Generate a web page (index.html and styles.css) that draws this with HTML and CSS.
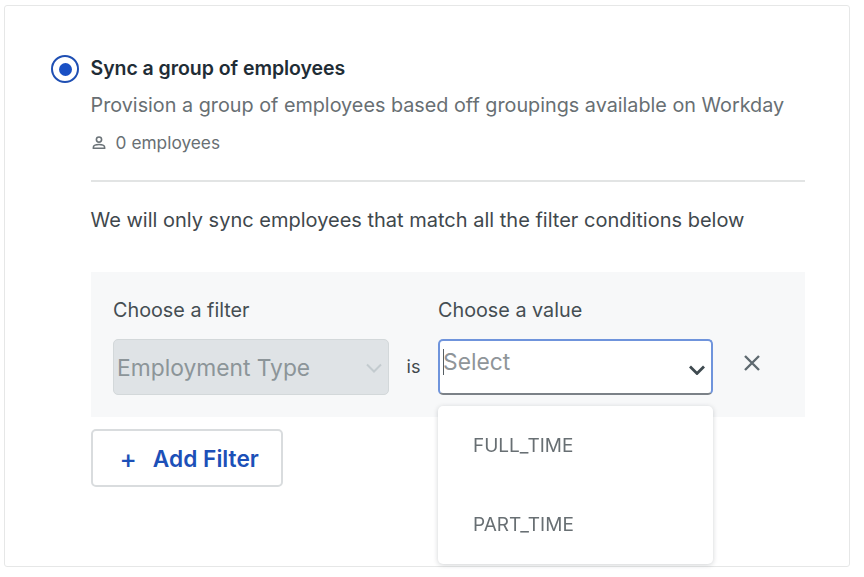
FILE: index.html
```html
<!DOCTYPE html>
<html lang="en">
<head>
<meta charset="utf-8">
<title>Sync a group of employees</title>
<link rel="stylesheet" href="styles.css">
</head>
<body>
<main class="card">
  <section class="option">
    <span class="radio"><span class="radio-dot"></span></span>
    <div class="option-body">
      <h2 class="title">Sync a group of employees</h2>
      <p class="desc">Provision a group of employees based off groupings available on Workday</p>
      <p class="count">
        <svg class="person" viewBox="0 0 16 16" width="16" height="16" fill="none" stroke="#6b7378" stroke-width="1.6"><circle cx="8" cy="4.6" r="2.6"/><path d="M2.400 13.200v-1c0-1.600 2.400-2.700 5.600-2.700s5.600 1.100 5.600 2.700v1z"/></svg>
        <span class="zero">0</span> employees
      </p>
      <hr class="rule">
      <p class="note">We will only sync employees that match all the filter conditions below</p>
      <div class="panel">
        <div class="field field-filter">
          <label class="label">Choose a filter</label>
          <div class="select select-disabled">
            <span>Employment Type</span>
            <svg class="chev" viewBox="0 0 18 10" width="18" height="10" fill="none" stroke="#c3cbcf" stroke-width="2"><path d="M2 1.500l7 7 7-7"/></svg>
          </div>
        </div>
        <span class="is">is</span>
        <div class="field field-value">
          <label class="label">Choose a value</label>
          <div class="select select-active">
            <span class="caret"></span><span class="placeholder">Select</span>
            <svg class="chev chev-dark" viewBox="0 0 18 10" width="18" height="10" fill="none" stroke="#3f4a50" stroke-width="2.800"><path d="M2 1.500l7 7 7-7"/></svg>
          </div>
          <ul class="menu">
            <li class="menu-item">FULL_TIME</li>
            <li class="menu-item">PART_TIME</li>
          </ul>
        </div>
        <svg class="close" viewBox="0 0 18 18" width="18" height="18" fill="none" stroke="#5f6a70" stroke-width="2.400"><path d="M2 2l14 14M16 2L2 16"/></svg>
      </div>
      <button class="add" type="button"><span class="plus">+</span>Add Filter</button>
    </div>
  </section>
</main>
</body>
</html>
```
FILE: styles.css
```css
* { box-sizing: border-box; }
html, body { margin: 0; height: 100%; background: #fff; }
body { font-family: Inter, "Liberation Sans", sans-serif; color: #3f484d; overflow: hidden; padding: 5px 14px 10px 4px; }
.card { height: 562px; border: 1px solid #e6e7e7; border-radius: 3px; padding: 47px 44px 0 46px; background: #fff; filter: blur(0.5px); }
.option { display: flex; gap: 12px; align-items: flex-start; }
.radio { flex: none; width: 28px; height: 28px; margin-top: 2px; border: 2.500px solid #1f4fb3; border-radius: 50%; display: flex; align-items: center; justify-content: center; }
.radio-dot { width: 13px; height: 13px; border-radius: 50%; background: #1a50c4; }
.option-body { flex: 1; min-width: 0; margin-left: -0.500px; }
.title { margin: 0; font-size: 19.500px; line-height: 30px; font-weight: 600; color: #1f2d36; letter-spacing: -0.050px; }
.desc { margin: 7px 0 0; font-size: 19.800px; line-height: 30px; color: #686f73; }
.count { margin: 10px 0 0; display: flex; align-items: center; font-size: 17.300px; line-height: 26px; color: #686f73; gap: 0; }
.person { margin-right: 9px; }
.zero { margin-right: 5px; }
.rule { margin: 24px 0 0; border: 0; border-top: 2px solid #e2e4e4; }
.note { margin: 23px 0 0; font-size: 20px; line-height: 30px; color: #3f484d; }
.panel { position: relative; margin-top: 37px; height: 145px; padding: 22px 0 0 22.500px; background: #f7f8f9; display: flex; align-items: flex-start; }
.field { display: flex; flex-direction: column; }
.field-filter { width: 276px; }
.field-value { position: relative; width: 275px; }
.label { font-size: 19.800px; line-height: 32px; color: #454e53; }
.is { margin: 59px 0 0; width: 49px; text-align: center; font-size: 18px; line-height: 28px; color: #3f484d; }
.select { margin-top: 13px; height: 56px; border-radius: 5px; display: flex; align-items: center; position: relative; font-size: 22.800px; }
.select-disabled { background: #dfe3e6; border: 1px solid #d3d8da; padding-left: 3px; color: #8c9599; }
.select-active { background: #fff; border: 2px solid #6f94dc; border-bottom-color: #7b8187; padding: 0 0 11px 3px; color: #8f9599; }
.caret { width: 1px; height: 26px; background: #565e63; margin-right: -1px; }
.chev { position: absolute; right: 5px; top: 23px; }
.chev-dark { right: 5px; top: 24px; }
.menu { position: absolute; top: 112px; left: 0; width: 275px; height: 158px; margin: 0; padding: 0; list-style: none; background: #fff; border-radius: 5px; box-shadow: 0 1px 5px rgba(40,50,60,.22); z-index: 2; }
.menu-item { height: 79px; padding: 26px 0 0 35px; font-size: 19px; line-height: 28px; color: #686f73; }
.close { position: absolute; left: 652px; top: 82px; }
.add { display: flex; align-items: center; margin-top: 12px; width: 192.500px; height: 58px; padding: 0 0 0 27px; background: #fff; border: 2px solid #d9dcde; border-radius: 5px; font-family: inherit; font-size: 22.700px; font-weight: 600; color: #1c50b8; }
.plus { margin-right: 16px; font-size: 26px; font-weight: 500; }
```
